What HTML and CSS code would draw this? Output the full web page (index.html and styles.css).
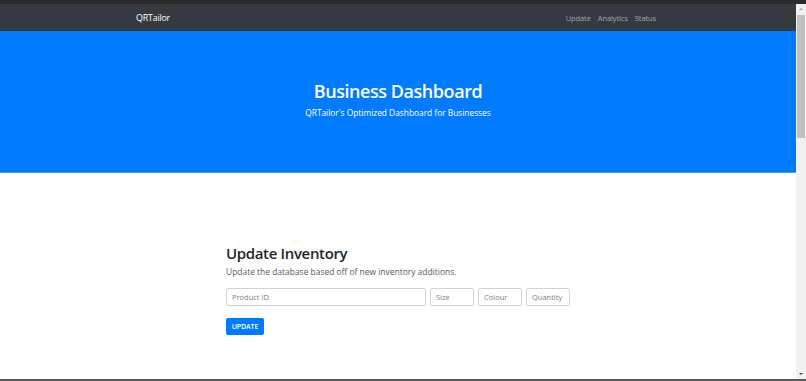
FILE: index.html
```html
<!DOCTYPE html>
<html lang="en">
<head>
<meta charset="utf-8">
<title>QRTailor Business Dashboard</title>
<link rel="stylesheet" href="styles.css">
</head>
<body>
<div class="topband"></div>
<div class="window">
  <div class="page">
    <nav class="navbar">
      <div class="nav-inner">
        <a class="brand" href="#">QRTailor</a>
        <div class="links">
          <a href="#">Update</a>
          <a href="#">Analytics</a>
          <a href="#">Status</a>
        </div>
      </div>
    </nav>
    <header class="hero">
      <h1 class="hero-title">Business Dashboard</h1>
      <p class="hero-sub">QRTailor's Optimized Dashboard for Businesses</p>
    </header>
    <main class="content">
      <h2 class="section-title">Update Inventory</h2>
      <p class="section-sub">Update the database based off of new inventory additions.</p>
      <form class="form-row">
        <input class="field field-wide" type="text" placeholder="Product ID">
        <input class="field" type="text" placeholder="Size">
        <input class="field" type="text" placeholder="Colour">
        <input class="field" type="text" placeholder="Quantity">
      </form>
      <button class="btn" type="button">UPDATE</button>
    </main>
  </div>
  <div class="scrollbar">
    <div class="arrow up"></div>
    <div class="track"><div class="thumb"></div></div>
    <div class="arrow down"></div>
  </div>
</div>
<div class="bottomband"></div>
</body>
</html>
```
FILE: styles.css
```css
* { box-sizing: border-box; }
html, body { margin: 0; padding: 0; }
body {
  width: 806px;
  height: 381px;
  overflow: hidden;
  display: flex;
  flex-direction: column;
  font-family: "Open Sans", "Noto Sans", sans-serif;
  background: #ffffff;
  color: #212529;
}
.topband { height: 4px; background: #2b2b2b; flex: none; }
.bottomband { height: 2px; background: #5a5a5a; flex: none; }
.window { flex: 1; display: flex; min-height: 0; }
.page { flex: 1; overflow: hidden; background: #fff; }

.navbar { height: 27px; background: #343a40; display: flex; align-items: center; }
.nav-inner {
  margin-left: 136px;
  width: 520px;
  display: flex;
  align-items: center;
  justify-content: space-between;
}
.brand { color: #fff; text-decoration: none; font-size: 8.9px; letter-spacing: -0.2px; }
.links { display: flex; gap: 7px; }
.links a { color: rgba(255,255,255,0.55); text-decoration: none; font-size: 7.5px; letter-spacing: -0.1px; }

.hero {
  height: 142px;
  background: #007bff;
  border-bottom: 1px solid #3e9bff;
  color: #fff;
  text-align: center;
  padding-top: 47px;
}
.hero-title { margin: 0; font-size: 18px; font-weight: 600; line-height: 26px; letter-spacing: -0.45px; }
.hero-sub { margin: 2px 0 0; font-size: 8.35px; line-height: 14px; font-weight: 400; }

.content { padding: 69px 0 0 226px; }
.section-title { margin: 0; font-size: 15px; font-weight: 600; line-height: 22px; letter-spacing: -0.35px; color: #212529; }
.section-sub { margin: 1px 0 0; font-size: 8.45px; line-height: 14px; color: #555b61; }
.form-row { display: flex; gap: 4.5px; margin-top: 9px; }
.field {
  width: 43.5px;
  height: 18px;
  border: 1px solid #ced4da;
  border-radius: 2px;
  padding: 0 5px;
  font-family: inherit;
  font-size: 7.5px;
  color: #495057;
  background: #fff;
  outline: none;
}
.field::placeholder { color: #7b8288; }
.field-wide { width: 199.5px; }
.btn {
  display: block;
  margin-top: 11.5px;
  width: 38px;
  height: 17.5px;
  padding: 0;
  border: none;
  border-radius: 2px;
  background: #007bff;
  color: #fff;
  font-family: inherit;
  font-size: 7px;
  font-weight: 600;
  letter-spacing: -0.1px;
}

.scrollbar {
  width: 10px;
  background: #f1f1f1;
  display: flex;
  flex-direction: column;
  align-items: center;
}
.track { flex: 1; width: 100%; padding: 0 1px; }
.thumb { height: 123px; background: #c1c1c1; margin-top: 1px; }
.arrow { height: 10px; width: 100%; position: relative; }
.arrow::after {
  content: "";
  position: absolute;
  left: 3px;
  top: 4px;
  border-left: 2px solid transparent;
  border-right: 2px solid transparent;
}
.arrow.up::after { border-bottom: 2px solid #a3a3a3; }
.arrow.down::after { border-top: 2px solid #505050; }
```
